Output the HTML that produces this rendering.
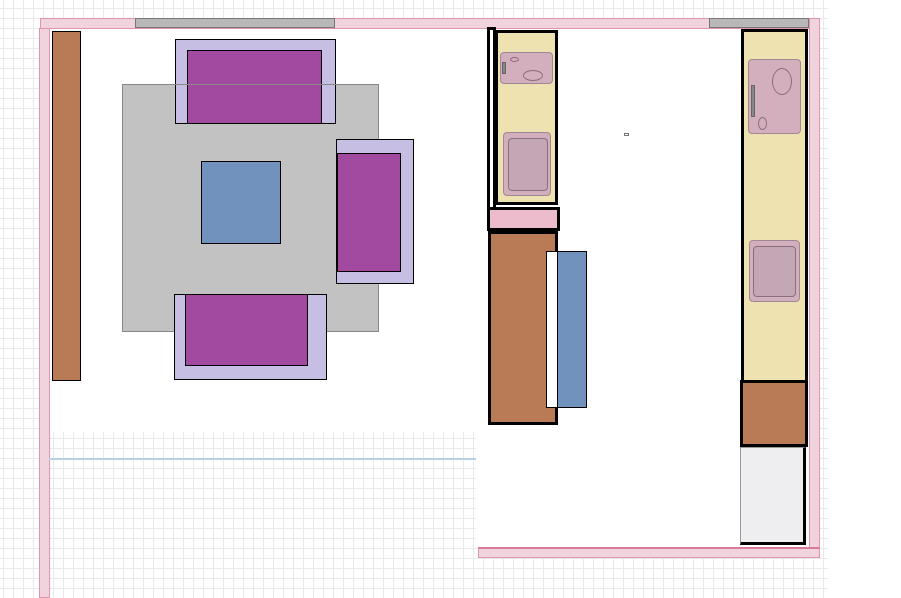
<!DOCTYPE html>
<html><head><style>
body{margin:0;width:901px;height:598px;overflow:hidden;position:relative;background-color:#fff;
background-image:linear-gradient(to right,#e9e9e9 1px,transparent 1px),linear-gradient(to bottom,#e9e9e9 1px,transparent 1px);
background-size:10px 10px;background-position:3px 8px;}
div{position:absolute;box-sizing:border-box}
.w{background:#f0d3dd;border:1px solid #e095ae}
.lav{background:#c7bfe3;border:1px solid #000}
.pur{background:#a24aa0;border:1px solid #000}
.brn{background:#b87b56}
.blu{background:#7092bd;border:1px solid #000}
.pk{background:#d3aebd;border:1px solid #a08894;border-radius:4px}
.ov{border:1px solid #8a6f7c;border-radius:50%}
</style></head><body>
<div style="left:49px;top:28px;width:436px;height:404px;background:#fff"></div>
<div style="left:476px;top:28px;width:333px;height:520px;background:#fff"></div>
<div style="left:828px;top:0;width:73px;height:598px;background:#fff"></div>
<!-- walls -->
<div class="w" style="left:40px;top:18px;width:780px;height:11px"></div>
<div class="w" style="left:39px;top:28px;width:11px;height:570px"></div>
<div class="w" style="left:809px;top:18px;width:11px;height:540px"></div>
<div class="w" style="left:478px;top:547px;width:342px;height:11px;border-top:2px solid #d87a98"></div>
<div style="left:135px;top:18px;width:200px;height:10px;background:#b8b8b8;border:1px solid #777"></div>
<div style="left:709px;top:18px;width:100px;height:10px;background:#b8b8b8;border:1px solid #777"></div>
<div style="left:49px;top:458px;width:427px;height:2px;background:#b8d0e6"></div>
<!-- living -->
<div class="brn" style="left:52px;top:31px;width:29px;height:350px;border:1px solid #000"></div>
<div style="left:122px;top:84px;width:257px;height:248px;background:#c2c2c2;border:1px solid #888"></div>
<div class="lav" style="left:175px;top:39px;width:161px;height:85px"></div>
<div class="pur" style="left:187px;top:50px;width:135px;height:74px"></div>
<div style="left:175px;top:84px;width:161px;height:1px;background:#888"></div>
<div class="lav" style="left:336px;top:139px;width:78px;height:145px"></div>
<div class="pur" style="left:337px;top:153px;width:64px;height:119px"></div>
<div class="lav" style="left:174px;top:294px;width:153px;height:86px"></div>
<div class="pur" style="left:185px;top:294px;width:123px;height:72px"></div>
<div class="blu" style="left:201px;top:161px;width:80px;height:83px"></div>
<!-- kitchen left -->
<div style="left:487px;top:27px;width:9px;height:204px;background:#fff;border:3px solid #000"></div>
<div style="left:495px;top:30px;width:63px;height:175px;background:#efe2b1;border:3px solid #000"></div>
<div class="pk" style="left:500px;top:52px;width:53px;height:32px"></div>
<div style="left:502px;top:62px;width:4px;height:12px;background:#888;border:1px solid #666"></div>
<div class="ov" style="left:510px;top:57px;width:9px;height:5px"></div>
<div class="ov" style="left:523px;top:70px;width:20px;height:11px"></div>
<div class="pk" style="left:503px;top:132px;width:48px;height:64px"></div>
<div style="left:508px;top:138px;width:40px;height:53px;border:1px solid #8a6f7c;border-radius:4px;background:#c4a7b4"></div>
<div style="left:487px;top:207px;width:73px;height:24px;background:#ecbccc;border:3px solid #000"></div>
<div class="brn" style="left:488px;top:231px;width:70px;height:194px;border:3px solid #000"></div>
<div style="left:546px;top:251px;width:12px;height:157px;background:#fff;border:1px solid #000"></div>
<div class="blu" style="left:557px;top:251px;width:30px;height:157px"></div>
<div style="left:624px;top:133px;width:5px;height:3px;border:1px solid #777"></div>
<!-- kitchen right -->
<div style="left:741px;top:29px;width:67px;height:354px;background:#efe2b1;border:3px solid #000"></div>
<div class="pk" style="left:748px;top:59px;width:53px;height:75px"></div>
<div style="left:751px;top:85px;width:4px;height:32px;background:#888;border:1px solid #666"></div>
<div class="ov" style="left:772px;top:68px;width:20px;height:27px"></div>
<div class="ov" style="left:758px;top:117px;width:9px;height:13px"></div>
<div class="pk" style="left:749px;top:240px;width:51px;height:62px"></div>
<div style="left:753px;top:246px;width:43px;height:51px;border:1px solid #8a6f7c;border-radius:4px;background:#c4a7b4"></div>
<div class="brn" style="left:740px;top:380px;width:68px;height:67px;border:3px solid #000"></div>
<div style="left:740px;top:447px;width:66px;height:98px;background:#eeeef0;border:1px solid #999;border-right:3px solid #000;border-bottom:3px solid #000"></div>
</body></html>
